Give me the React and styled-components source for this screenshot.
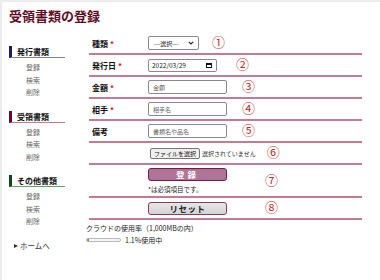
import React from 'react'
import styled, { createGlobalStyle } from 'styled-components'

const GlobalStyle = createGlobalStyle`
    html, body {
        margin: 0;
        padding: 0;
        background: #fff;
    }
    body {
        font-family: "Noto Sans CJK JP", "Noto Sans", sans-serif;
        color: #222;
    }
`

const Page = styled.div`
    box-sizing: border-box;
    width: 380px;
    height: 280px;
    border-top: 2px solid #ececec;
    border-left: 2px solid #ececec;
    padding: 5px 0 0 7px;
    overflow: hidden;
`

const Title = styled.h1`
    margin: 0;
    font-size: 13px;
    line-height: 18px;
    font-weight: bold;
    color: #5e0a26;
`

const Body = styled.div`
    display: flex;
    margin-top: 8px;
`

const Sidebar = styled.nav`
    flex: none;
    width: 77px;
    padding-top: 13px;
`

const NavGroup = styled.div`
    margin-bottom: 12px;
`

const NavHeading = styled.div`
    width: 48px;
    height: 11px;
    line-height: 11px;
    padding-left: 5px;
    border-left: 3px solid ${p => p.$bar};
    border-bottom: 1px solid ${p => p.$line};
    font-size: 8px;
    font-weight: bold;
    color: #111;
    margin-bottom: 3px;
`

const NavItem = styled.a`
    display: block;
    padding-left: 17px;
    font-size: 7px;
    line-height: 12.5px;
    color: #666;
    text-decoration: none;
`

const HomeLink = styled.a`
    display: flex;
    align-items: center;
    gap: 2px;
    padding-left: 5px;
    font-size: 7.5px;
    line-height: 12px;
    color: #333;
    text-decoration: none;
    &::before {
        content: '';
        border-left: 4px solid #333;
        border-top: 2.5px solid transparent;
        border-bottom: 2.5px solid transparent;
    }
`

const Main = styled.main`
    flex: 1;
`

const Form = styled.form`
    width: 273px;
    margin: 0 0 0 3px;
`

const Row = styled.div`
    display: flex;
    align-items: center;
    box-sizing: border-box;
    height: ${p => p.$h || 22}px;
    padding-left: 3px;
    border-bottom: 2px solid #c27a95;
`

const Label = styled.div`
    flex: none;
    width: 56px;
    font-size: 8px;
    font-weight: bold;
    color: #111;
    span {
        color: #e01010;
        margin-left: 2px;
    }
`

const Field = styled.div`
    display: flex;
    flex-direction: column;
    align-items: flex-start;
`

const SelectBox = styled.div`
    box-sizing: border-box;
    width: 51px;
    height: 14px;
    border: 1px solid #8a8a8a;
    border-radius: 2px;
    display: flex;
    align-items: center;
    justify-content: space-between;
    padding: 0 4px 0 5px;
    font-size: 6px;
    color: #222;
`

const DateBox = styled.div`
    box-sizing: border-box;
    width: 69px;
    height: 13px;
    border: 1px solid #8a8a8a;
    border-radius: 2px;
    display: flex;
    align-items: center;
    justify-content: space-between;
    padding: 0 4px 0 3px;
    font-size: 6.5px;
    color: #222;
`

const CalIcon = styled.span`
    box-sizing: border-box;
    width: 6px;
    height: 5px;
    border: 1px solid #111;
    border-top-width: 2px;
`

const TextInput = styled.input`
    box-sizing: border-box;
    width: 79px;
    height: 14px;
    border: 1px solid #8a8a8a;
    border-radius: 2px;
    padding: 0 4px;
    font-family: inherit;
    font-size: 6px;
    outline: none;
    &::placeholder {
        color: #666;
    }
`

const FileRow = styled.div`
    display: flex;
    align-items: center;
    gap: 2px;
    padding-left: 2px;
    font-size: 6px;
    color: #333;
`

const FileButton = styled.button`
    box-sizing: border-box;
    height: 11px;
    padding: 0 3px;
    border: 1px solid #777;
    border-radius: 2px;
    background: #efefef;
    font-family: inherit;
    font-size: 6px;
    color: #111;
    line-height: 9px;
`

const ActionButton = styled.button`
    box-sizing: border-box;
    width: 79px;
    height: 13px;
    padding: 0;
    border: 1.5px solid ${p => (p.$primary ? '#761a45' : '#8a3a5a')};
    border-radius: 3px;
    background: ${p => (p.$primary ? '#ae7599' : 'linear-gradient(#e6e6e6, #d4d4d4)')};
    color: ${p => (p.$primary ? '#fff' : '#222')};
    font-family: inherit;
    font-size: 8.5px;
    font-weight: bold;
    line-height: 10px;
    letter-spacing: ${p => (p.$primary ? '3px' : '0.5px')};
`

const Note = styled.div`
    margin-top: 3px;
    font-size: 6.5px;
    color: #222;
`

const Marker = styled.span`
    margin-left: ${p => p.$gap}px;
    font-size: 13px;
    line-height: 14px;
    color: #c22a2a;
    font-family: "DejaVu Serif", "Noto Sans CJK JP", serif;
`

const Usage = styled.div`
    margin-top: 3px;
    font-size: 7px;
    color: #222;
`

const UsageLine = styled.div`
    display: flex;
    align-items: center;
    gap: 4px;
    margin-top: 2px;
`

const UsageText = styled.span`
    font-size: 7px;
    color: #222;
`

const Meter = styled.div`
    box-sizing: border-box;
    width: 35px;
    height: 4px;
    border: 1px solid #b8b8b8;
    border-radius: 2px;
    background: #f4f4f4;
    overflow: hidden;
`

const MeterFill = styled.div`
    height: 100%;
    background: #3cb043;
`

const navGroups = [
    { title: '発行書類', bar: '#1c1c5a', line: '#8080b0' },
    { title: '受領書類', bar: '#6a0a26', line: '#c27a95' },
    { title: 'その他書類', bar: '#0d4a14', line: '#6aa06e' },
]

const App = () => {
    const used = 1.1
    return (
        <Page>
            <GlobalStyle />
            <Title>受領書類の登録</Title>
            <Body>
                <Sidebar>
                    {navGroups.map(g => (
                        <NavGroup key={g.title}>
                            <NavHeading $bar={g.bar} $line={g.line}>{g.title}</NavHeading>
                            <NavItem href='#'>登録</NavItem>
                            <NavItem href='#'>検索</NavItem>
                            <NavItem href='#'>削除</NavItem>
                        </NavGroup>
                    ))}
                    <HomeLink href='#'>ホームへ</HomeLink>
                </Sidebar>
                <Main>
                    <Form onSubmit={e => e.preventDefault()}>
                        <Row>
                            <Label>種類<span>*</span></Label>
                            <SelectBox>
                                ---選択---
                                <svg width='6' height='4' viewBox='0 0 6 4'>
                                    <path d='M0.8 0.8 L3 3 L5.2 0.8' fill='none' stroke='#222' strokeWidth='1.2' />
                                </svg>
                            </SelectBox>
                            <Marker $gap={13}>①</Marker>
                        </Row>
                        <Row>
                            <Label>発行日<span>*</span></Label>
                            <DateBox>2022/03/29<CalIcon /></DateBox>
                            <Marker $gap={19}>②</Marker>
                        </Row>
                        <Row>
                            <Label>金額<span>*</span></Label>
                            <TextInput placeholder='金額' />
                            <Marker $gap={15}>③</Marker>
                        </Row>
                        <Row>
                            <Label>相手<span>*</span></Label>
                            <TextInput placeholder='相手名' />
                            <Marker $gap={15}>④</Marker>
                        </Row>
                        <Row>
                            <Label>備考</Label>
                            <TextInput placeholder='書類名や品名' />
                            <Marker $gap={15}>⑤</Marker>
                        </Row>
                        <Row>
                            <Label />
                            <FileRow>
                                <FileButton type='button'>ファイルを選択</FileButton>
                                選択されていません
                            </FileRow>
                            <Marker $gap={11}>⑥</Marker>
                        </Row>
                        <Row $h={33}>
                            <Label />
                            <Field>
                                <ActionButton $primary type='submit'>登録</ActionButton>
                                <Note>*は必須項目です。</Note>
                            </Field>
                            <Marker $gap={38}>⑦</Marker>
                        </Row>
                        <Row>
                            <Label />
                            <ActionButton type='reset'>リセット</ActionButton>
                            <Marker $gap={38}>⑧</Marker>
                        </Row>
                    </Form>
                    <Usage>クラウドの使用率（1,000MBの内）</Usage>
                    <UsageLine>
                        <Meter><MeterFill style={{ width: `${Math.max(used, 6)}%` }} /></Meter>
                        <UsageText>{used}%使用中</UsageText>
                    </UsageLine>
                </Main>
            </Body>
        </Page>
    )
}

export default App
